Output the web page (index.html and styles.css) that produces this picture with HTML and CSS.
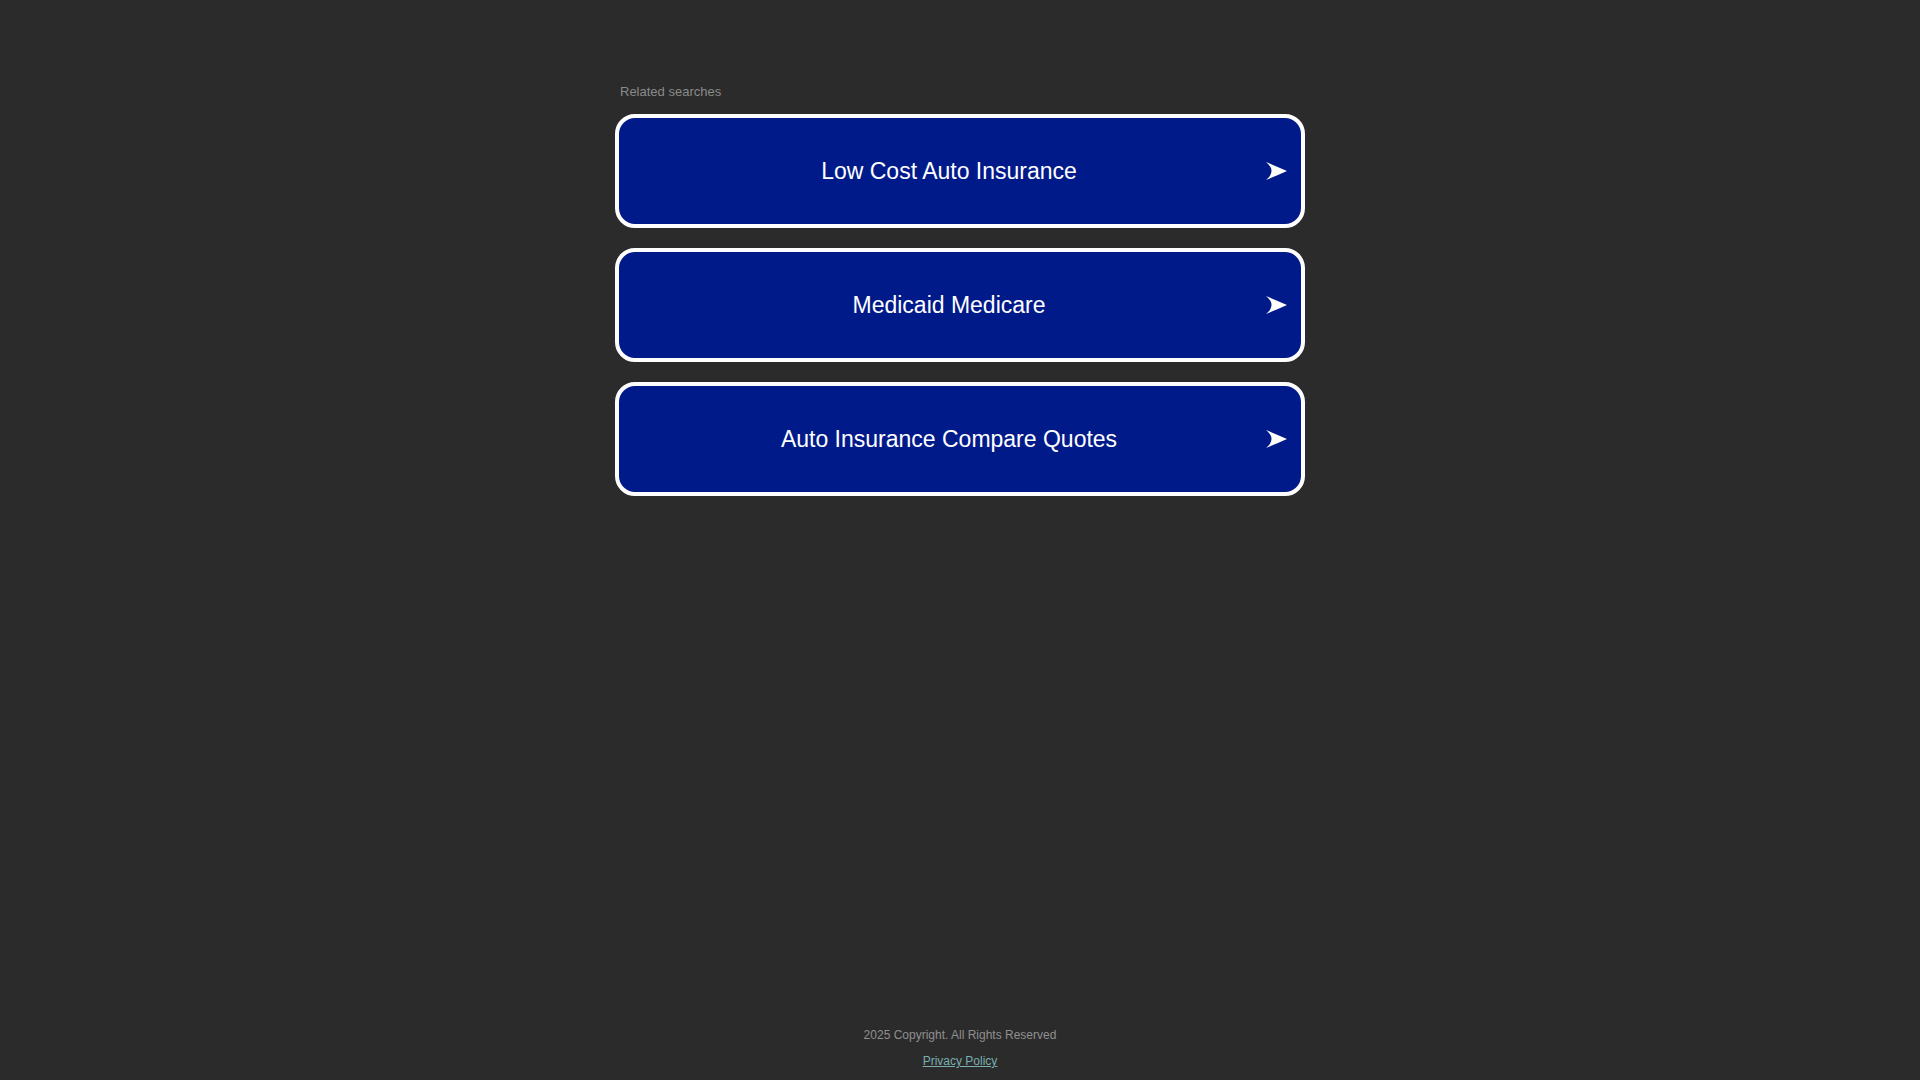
FILE: index.html
```html
<!DOCTYPE html>
<html lang="en">
<head>
<meta charset="utf-8">
<title>Related searches</title>
<link rel="stylesheet" href="styles.css">
</head>
<body>
<main class="main">
  <div class="label">Related searches</div>
  <div class="list">
    <a class="card" href="#">
      <span class="card-text">Low Cost Auto Insurance</span>
      <svg class="arrow" width="21" height="18" viewBox="0 0 21 18"><path d="M0 0 Q11 4.5 21 9 Q11 13.5 0 18 Q11 9 0 0 Z" fill="#fff"/></svg>
    </a>
    <a class="card" href="#">
      <span class="card-text">Medicaid Medicare</span>
      <svg class="arrow" width="21" height="18" viewBox="0 0 21 18"><path d="M0 0 Q11 4.5 21 9 Q11 13.5 0 18 Q11 9 0 0 Z" fill="#fff"/></svg>
    </a>
    <a class="card" href="#">
      <span class="card-text">Auto Insurance Compare Quotes</span>
      <svg class="arrow" width="21" height="18" viewBox="0 0 21 18"><path d="M0 0 Q11 4.5 21 9 Q11 13.5 0 18 Q11 9 0 0 Z" fill="#fff"/></svg>
    </a>
  </div>
</main>
<footer class="footer">
  <div class="copyright">2025 Copyright. All Rights Reserved</div>
  <a class="privacy" href="#">Privacy Policy</a>
</footer>
</body>
</html>
```

FILE: styles.css
```css
html, body {
  margin: 0;
  padding: 0;
}
body {
  background: #2b2b2b;
  font-family: "Liberation Sans", Arial, sans-serif;
  min-height: 100vh;
  display: flex;
  flex-direction: column;
}
.main {
  width: 690px;
  margin: 0 auto;
  padding-top: 84px;
}
.label {
  font-size: 13px;
  line-height: 15px;
  color: #8a8a8a;
  padding-left: 5px;
  margin-bottom: 15px;
}
.list {
  display: flex;
  flex-direction: column;
  gap: 20px;
}
.card {
  box-sizing: border-box;
  height: 114px;
  border: 4px solid #ffffff;
  border-radius: 20px;
  background: #011a8a;
  display: flex;
  align-items: center;
  padding: 0 14px;
  text-decoration: none;
  color: #ffffff;
}
.card-text {
  flex: 1;
  text-align: center;
  font-size: 23px;
  line-height: 28px;
}
.arrow {
  display: block;
  flex: none;
  margin-left: 1px;
}
.footer {
  margin-top: auto;
  display: flex;
  flex-direction: column;
  align-items: center;
  padding-bottom: 12px;
}
.copyright {
  font-size: 12px;
  line-height: 15px;
  color: #8f8f8f;
  margin-bottom: 11px;
}
.privacy {
  font-size: 12px;
  line-height: 14px;
  color: #7aaeb0;
  text-decoration: underline;
}
```
